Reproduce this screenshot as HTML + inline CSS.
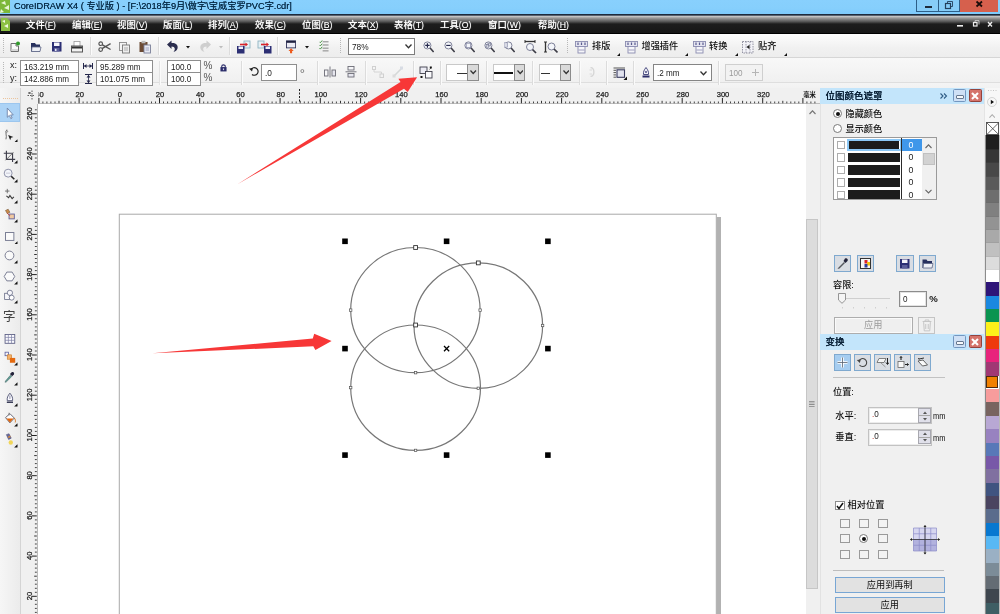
<!DOCTYPE html><html><head><meta charset="utf-8"><title>CorelDRAW X4</title><style>
*{box-sizing:border-box;margin:0;padding:0}
html,body{width:1000px;height:614px;overflow:hidden;background:#fff}
body{font-family:"Liberation Sans","Noto Sans CJK SC",sans-serif;font-size:9px;color:#222;position:relative;will-change:transform}
.a{position:absolute}
#title{left:0;top:0;width:1000px;height:14px;background:linear-gradient(#88d0fd,#86cffc 60%,#7dcafb)}
#title .t{left:14px;top:0;line-height:13px;font-size:9.23px;color:#0a2f4c;text-shadow:0 0 .5px #0a2f4c;white-space:nowrap;letter-spacing:0}
#menu{left:0;top:14px;width:1000px;height:20px;background:linear-gradient(#1c2a3c 0,#1c2a3c 1.3px,#d2d2d2 1.9px,#b4b4b4 3px,#8a8a8a 4.8px,#585858 7.5px,#1d1d1d 10px,#171717 19px,#000 19.5px)}
#menu span{position:absolute;top:2.3px;line-height:17px;font-size:9.4px;font-weight:500;color:#fff;white-space:nowrap;text-shadow:0 0 1px #999}
#menu span b{font-weight:400;font-size:8.7px}
#tb1{left:0;top:34px;width:1000px;height:23px;background:linear-gradient(#fdfdfd,#f1f1f1 60%,#ededed)}
#tb2{left:0;top:57px;width:1000px;height:31px;background:linear-gradient(#d6d6d6 0,#d6d6d6 1px,#f8f8f8 1px,#f0f0f0 25.5px,#dedede 25.5px,#dedede 26.3px,#f4f4f4 26.3px,#f2f2f2 100%)}
.sep{position:absolute;width:1px;background:#dcdcdc;box-shadow:1px 0 0 #fbfbfb}
.inp{position:absolute;background:#fff;border:1px solid #8e8e8e;font-size:9.4px;line-height:11px;padding-left:3px;color:#222;white-space:nowrap;overflow:hidden}
.inp>i{font-style:normal;display:inline-block;transform:scaleX(.865);transform-origin:0 50%}
.rl text{stroke:#1c1c1c;stroke-width:.25px}
.lbl{position:absolute;font-size:9px;line-height:11px;white-space:nowrap;color:#222}
#hr{left:24px;top:88px;width:796px;height:16px;background:#f0f0f0;border-bottom:1px solid #8a8a8a}
#vr{left:24px;top:104px;width:14px;height:510px;background:#f0f0f0;border-right:1px solid #8a8a8a}
#tools{left:0;top:88px;width:24px;height:526px;background:linear-gradient(90deg,#f6f6f6,#ebebeb)}
#canvas{left:38px;top:104px;width:768px;height:510px;background:#fff}
#vsb{left:806px;top:104px;width:14px;height:510px;background:#f0f0f0}
#dock{left:820px;top:88px;width:164px;height:526px;background:#f0f0f0}
#pal{left:984px;top:88px;width:16px;height:526px;background:#f7f7f7}
.dh{position:absolute;left:0;width:164px;height:15.5px;background:#c3e5fb;font-size:9.5px;line-height:15.5px;color:#0a2238;padding-left:5.5px;font-weight:500;text-shadow:0 0 .6px #0a2238}
#dock .lbl{font-weight:500;color:#111}
.btn{position:absolute;border:1px solid #7fa9cf;background:#dfe3e8}
.cb{position:absolute;width:9px;height:9px;border:1px solid #8a8a8a;background:#fff}
</style></head><body>
<div id="title" class="a">
<svg class="a" style="left:0;top:0" width="13" height="14" viewBox="0 0 13 14"><rect width="10" height="13" fill="#7db83a"/><path d="M1 3 L5 1 L6 5 Z M4 8 L9 5 L9 10 Z M1 9 L4 12 L0 13Z" fill="#e9f5d6"/></svg>
<div class="a t">CoreIDRAW X4 ( 专业版 ) - [F:\2018年9月\做字\宝威宝罗PVC字.cdr]</div>
<div class="a" style="left:916px;top:0;width:23px;height:12px;border:1px solid #2d5f88;border-top:0;background:#86cdf8"></div>
<div class="a" style="left:938px;top:0;width:22px;height:12px;border:1px solid #2d5f88;border-top:0;border-left:1px solid #2d5f88;background:#86cdf8"></div>
<div class="a" style="left:960px;top:0;width:38px;height:12px;background:#d6604d"></div>
<svg class="a" style="left:916px;top:0" width="84" height="14" viewBox="0 0 84 14"><rect x="9" y="6" width="7" height="2" fill="#1d2b3a"/><rect x="29.5" y="3.500" width="5" height="5" fill="none" stroke="#22405c" stroke-width="1.2"/><path d="M31.500 3 V1.500 H36.500 V6.500 H35" fill="none" stroke="#22405c" stroke-width="0.9"/><path d="M60.500 1.500 L66 6.500 M66 1.500 L60.500 6.500" stroke="#1b0d0a" stroke-width="1.8"/></svg>
</div>
<div id="menu" class="a">
<svg class="a" style="left:0;top:4px" width="11" height="14" viewBox="0 0 11 14"><path d="M1 0 H7 L10 3 V13 H1Z" fill="#8cc043"/><path d="M2 3 L5 2 L5 5Z M4 8 L8 6 L8 10Z" fill="#f0f8e0"/></svg>
<span style="left:26px">文件<b>(<u>F</u>)</b></span>
<span style="left:72px">编辑<b>(<u>E</u>)</b></span>
<span style="left:117px">视图<b>(<u>V</u>)</b></span>
<span style="left:163px">版面<b>(<u>L</u>)</b></span>
<span style="left:208px">排列<b>(<u>A</u>)</b></span>
<span style="left:255px">效果<b>(<u>C</u>)</b></span>
<span style="left:302px">位图<b>(<u>B</u>)</b></span>
<span style="left:348px">文本<b>(<u>X</u>)</b></span>
<span style="left:394px">表格<b>(<u>T</u>)</b></span>
<span style="left:440px">工具<b>(<u>O</u>)</b></span>
<span style="left:488px">窗口<b>(<u>W</u>)</b></span>
<span style="left:538px">帮助<b>(<u>H</u>)</b></span>
<svg class="a" style="left:955px;top:6px" width="40" height="10" viewBox="0 0 40 10"><rect x="2" y="5" width="6" height="1.600" fill="#eee"/><rect x="18.500" y="2.500" width="3.500" height="3.500" fill="none" stroke="#eee" stroke-width="1.200"/><path d="M20 2 V0.600 H24 V4.500" fill="none" stroke="#ddd" stroke-width="0.800"/><path d="M33 2 L37 6.500 M37 2 L33 6.500" stroke="#eee" stroke-width="1.300"/></svg>
</div>
<div id="tb1" class="a">
<svg class="a" style="left:3px;top:4px" width="2" height="16"><rect x="0" y="0" width="1" height="1" fill="#b8b8b8"/><rect x="0" y="2" width="1" height="1" fill="#b8b8b8"/><rect x="0" y="4" width="1" height="1" fill="#b8b8b8"/><rect x="0" y="6" width="1" height="1" fill="#b8b8b8"/><rect x="0" y="8" width="1" height="1" fill="#b8b8b8"/><rect x="0" y="10" width="1" height="1" fill="#b8b8b8"/><rect x="0" y="12" width="1" height="1" fill="#b8b8b8"/><rect x="0" y="14" width="1" height="1" fill="#b8b8b8"/></svg>
<svg class="a" style="left:10px;top:7px" width="11" height="12" viewBox="0 0 11 12"><path d="M1 2.500 H6 V5 H8.500 V10.500 H1Z" fill="#fafafa" stroke="#6e6e6e" stroke-width="1"/><rect x="1.500" y="8" width="6.500" height="2" fill="#d8d8d8"/><circle cx="8" cy="2.500" r="2" fill="#2f9a2a"/></svg>
<svg class="a" style="left:30px;top:7px" width="12" height="12" viewBox="0 0 12 12"><path d="M1 2 H5 L6 3.500 H10 V10.500 H1Z" fill="#27305e"/><path d="M2 6 H11 L10 10.500 H1.500Z" fill="#eef0f6" stroke="#5a6384" stroke-width="0.800"/></svg>
<svg class="a" style="left:52px;top:8px" width="10" height="10" viewBox="0 0 10 10"><rect x="0" y="0" width="9.500" height="9.500" fill="#2c2f74"/><rect x="2" y="0.500" width="5.500" height="3.500" fill="#f4f4fa"/><rect x="2" y="6" width="5.500" height="3.500" fill="#5b5e9a"/><rect x="3" y="6.800" width="1.500" height="2.200" fill="#e8e8f4"/></svg>
<svg class="a" style="left:71px;top:7px" width="12" height="12" viewBox="0 0 12 12"><rect x="3" y="0.500" width="6" height="5" fill="#fff" stroke="#9a9a9a" stroke-width="0.800"/><rect x="0.500" y="5" width="11" height="6" fill="#f2f2f2" stroke="#555" stroke-width="1"/><rect x="1" y="5.500" width="10" height="2" fill="#333"/></svg>
<div class="sep" style="left:90px;top:3px;height:18px"></div>
<svg class="a" style="left:97.5px;top:7px" width="13.5" height="11.7" viewBox="0 0 15 13"><circle cx="3" cy="3" r="2" fill="none" stroke="#555" stroke-width="1.300"/><circle cx="3" cy="9.500" r="2" fill="none" stroke="#555" stroke-width="1.300"/><path d="M4.500 4 L14 9.500 M4.500 8.500 L14 3" stroke="#555" stroke-width="1.500"/></svg>
<svg class="a" style="left:119px;top:8px" width="12" height="12" viewBox="0 0 12 12"><rect x="0.500" y="0.500" width="7" height="8" fill="#f4f4f4" stroke="#8a8a8a" stroke-width="0.900"/><rect x="3.500" y="3" width="7" height="8" fill="#eee" stroke="#777" stroke-width="0.900"/><path d="M5 6 H9 M5 8 H9" stroke="#999" stroke-width="0.800"/></svg>
<svg class="a" style="left:139px;top:6px" width="13" height="14" viewBox="0 0 13 14"><rect x="0.500" y="2" width="8" height="10" fill="#6b4a34"/><rect x="2.500" y="0.800" width="4" height="2.500" fill="#bdbdbd"/><rect x="5" y="5" width="6.500" height="8" fill="#e8eaf2" stroke="#7a7f99" stroke-width="0.900"/><path d="M6.500 8 H10 M6.500 10 H10" stroke="#8d93b5" stroke-width="0.800"/></svg>
<div class="sep" style="left:158px;top:3px;height:18px"></div>
<svg class="a" style="left:166px;top:6.2px" width="14" height="13" viewBox="0 0 14 13"><path d="M1 4.500 L5.500 0.500 V3 C10 2.500 12.500 5.500 11.500 8.500 C11 10.500 9.500 11.500 7.500 11.800 C9.500 10 9.500 6.500 5.500 6.500 V9Z" fill="#2b2d4e"/></svg>
<svg class="a" style="left:186px;top:12px" width="4" height="2.5" viewBox="0 0 4 2.5"><path d="M0 0 H4 L2.0 2.5Z" fill="#111"/></svg>
<svg class="a" style="left:198px;top:6.2px" width="14" height="13" viewBox="0 0 14 13"><path d="M13 4.500 L8.500 0.500 V3 C4 2.500 1.500 5.500 2.500 8.500 C3 10.500 4.500 11.500 6.500 11.800 C4.500 10 4.500 6.500 8.500 6.500 V9Z" fill="#cfcfcf"/></svg>
<svg class="a" style="left:219px;top:12px" width="4" height="2.5" viewBox="0 0 4 2.5"><path d="M0 0 H4 L2.0 2.5Z" fill="#bdbdbd"/></svg>
<div class="sep" style="left:229px;top:3px;height:18px"></div>
<svg class="a" style="left:236px;top:6px" width="15" height="14" viewBox="0 0 15 14"><rect x="8" y="1" width="6" height="7" fill="#e6f0f4" stroke="#8fb3c2" stroke-width="0.900"/><rect x="1" y="6" width="7.500" height="7.500" fill="#2c2f74"/><rect x="2.500" y="6.500" width="4.500" height="2.500" fill="#f0f0fa"/><path d="M4 4.500 H10" stroke="#d8232a" stroke-width="1.600"/><path d="M9.500 2.500 L12 4.500 L9.500 6.500Z" fill="#d8232a"/></svg>
<svg class="a" style="left:257px;top:6px" width="15" height="14" viewBox="0 0 15 14"><rect x="1" y="1" width="6" height="7" fill="#e6f0f4" stroke="#8fb3c2" stroke-width="0.900"/><rect x="7" y="6" width="7.500" height="7.500" fill="#2c2f74"/><rect x="8.500" y="6.500" width="4.500" height="2.500" fill="#f0f0fa"/><path d="M4 4.500 H10" stroke="#d8232a" stroke-width="1.600"/><path d="M9.500 2.500 L12 4.500 L9.500 6.500Z" fill="#d8232a"/></svg>
<div class="sep" style="left:277px;top:3px;height:18px"></div>
<svg class="a" style="left:285.8px;top:5.5px" width="10.5" height="14" viewBox="0 0 12 16"><rect x="0.500" y="1" width="10.500" height="8" fill="#ececf4" stroke="#2a2d55" stroke-width="1"/><rect x="0.500" y="1" width="10.500" height="2.200" fill="#1f2140"/><path d="M5.800 9.500 L8.800 12.500 H7 V15 H4.600 V12.500 H2.800Z" fill="#ee5a1c"/></svg>
<svg class="a" style="left:305px;top:12px" width="4" height="2.5" viewBox="0 0 4 2.5"><path d="M0 0 H4 L2.0 2.5Z" fill="#111"/></svg>
<svg class="a" style="left:318.5px;top:6px" width="10" height="11.8" viewBox="0 0 11 13"><path d="M4 2 H10.500 M4 5.500 H10.500 M4 9 H10.500 M4 12 H10.500" stroke="#7a7a7a" stroke-width="1"/><path d="M0.500 2 L1.500 3 L3.500 0.500 M0.500 5.500 L1.500 6.500 L3.500 4 M0.500 9 L1.500 10 L3.500 7.500" stroke="#3e8f3a" stroke-width="1" fill="none"/></svg>
<svg class="a" style="left:340px;top:4px" width="2" height="16"><rect x="0" y="0" width="1" height="1" fill="#b8b8b8"/><rect x="0" y="2" width="1" height="1" fill="#b8b8b8"/><rect x="0" y="4" width="1" height="1" fill="#b8b8b8"/><rect x="0" y="6" width="1" height="1" fill="#b8b8b8"/><rect x="0" y="8" width="1" height="1" fill="#b8b8b8"/><rect x="0" y="10" width="1" height="1" fill="#b8b8b8"/><rect x="0" y="12" width="1" height="1" fill="#b8b8b8"/><rect x="0" y="14" width="1" height="1" fill="#b8b8b8"/></svg>
<div class="inp" style="left:348px;top:4px;width:67px;height:17px;line-height:15px;font-size:9.6px;border-color:#7d7d7d"><i>78%</i></div>
<svg class="a" style="left:405px;top:10px" width="7" height="5" viewBox="0 0 7 5"><path d="M0.500 0.500 L3.500 3.800 L6.500 0.500" fill="none" stroke="#333" stroke-width="1.300"/></svg>
<svg class="a" style="left:422.5px;top:6.5px" width="11.5" height="12.4" viewBox="0 0 13 14"><circle cx="5" cy="5" r="4" fill="#f4f6fa" stroke="#7c7f97" stroke-width="1.100"/><path d="M2.500 5 H7.500 M5 2.500 V7.500" stroke="#23264a" stroke-width="1.300"/><path d="M8 8 L12 12.500" stroke="#3c3c46" stroke-width="1.800"/></svg>
<svg class="a" style="left:443.5px;top:6.5px" width="11.5" height="12.4" viewBox="0 0 13 14"><circle cx="5" cy="5" r="4" fill="#f4f6fa" stroke="#7c7f97" stroke-width="1.100"/><path d="M2.500 5 H7.500" stroke="#23264a" stroke-width="1.300"/><path d="M8 8 L12 12.500" stroke="#3c3c46" stroke-width="1.800"/></svg>
<svg class="a" style="left:463.5px;top:6.5px" width="11.5" height="12.4" viewBox="0 0 13 14"><circle cx="5" cy="5" r="4" fill="#f4f6fa" stroke="#7c7f97" stroke-width="1.100"/><rect x="2.500" y="2.500" width="5" height="5" fill="none" stroke="#8a8da8" stroke-width="0.900"/><path d="M8 8 L12 12.500" stroke="#3c3c46" stroke-width="1.800"/></svg>
<svg class="a" style="left:483.5px;top:6.5px" width="11.5" height="12.4" viewBox="0 0 13 14"><circle cx="5" cy="5" r="4" fill="#f4f6fa" stroke="#7c7f97" stroke-width="1.100"/><rect x="2.500" y="4" width="3" height="3" fill="none" stroke="#777a95" stroke-width="0.800"/><rect x="4.500" y="2.500" width="3" height="3" fill="none" stroke="#777a95" stroke-width="0.800"/><path d="M8 8 L12 12.500" stroke="#3c3c46" stroke-width="1.800"/></svg>
<svg class="a" style="left:503.5px;top:6.5px" width="11.5" height="12.4" viewBox="0 0 13 14"><circle cx="5" cy="5" r="4" fill="#f4f6fa" stroke="#7c7f97" stroke-width="1.100"/><rect x="0" y="2" width="4" height="5" fill="#d9dbe6" stroke="#8a8da8" stroke-width="0.700"/><path d="M8 8 L12 12.500" stroke="#3c3c46" stroke-width="1.800"/></svg>
<svg class="a" style="left:524px;top:6px" width="13" height="14" viewBox="0 0 13 14"><path d="M1 1.500 H11" stroke="#333" stroke-width="1.300"/><path d="M1 0 V3 M11 0 V3" stroke="#333" stroke-width="1"/><circle cx="6" cy="7" r="3.500" fill="#f4f6fa" stroke="#7c7f97" stroke-width="1"/><path d="M8.500 9.500 L12 13" stroke="#3c3c46" stroke-width="1.700"/></svg>
<svg class="a" style="left:544px;top:6px" width="14" height="14" viewBox="0 0 14 14"><path d="M1.500 2 V12" stroke="#333" stroke-width="1.300"/><path d="M0 2 H3 M0 12 H3" stroke="#333" stroke-width="1"/><circle cx="7.500" cy="6.500" r="3.500" fill="#f4f6fa" stroke="#7c7f97" stroke-width="1"/><path d="M10 9 L13.500 12.500" stroke="#3c3c46" stroke-width="1.700"/></svg>
<svg class="a" style="left:567px;top:4px" width="2" height="16"><rect x="0" y="0" width="1" height="1" fill="#b8b8b8"/><rect x="0" y="2" width="1" height="1" fill="#b8b8b8"/><rect x="0" y="4" width="1" height="1" fill="#b8b8b8"/><rect x="0" y="6" width="1" height="1" fill="#b8b8b8"/><rect x="0" y="8" width="1" height="1" fill="#b8b8b8"/><rect x="0" y="10" width="1" height="1" fill="#b8b8b8"/><rect x="0" y="12" width="1" height="1" fill="#b8b8b8"/><rect x="0" y="14" width="1" height="1" fill="#b8b8b8"/></svg>
<svg class="a" style="left:575px;top:7px" width="13" height="13" viewBox="0 0 13 13"><rect x="0.500" y="0.500" width="12" height="5" fill="#e4e4f0" stroke="#8b8cb0" stroke-width="0.900"/><path d="M3 1.500 V4 M6.500 1.500 V4 M10 1.500 V4" stroke="#5a5c90" stroke-width="1.200"/><rect x="3" y="5.500" width="7" height="6.500" fill="#f6f6fa" stroke="#8b8cb0" stroke-width="0.900"/><path d="M3.500 9 H9.500" stroke="#8b8cb0" stroke-width="0.800"/></svg>
<div class="lbl" style="left:592px;top:6px;font-size:9.2px;line-height:12px;color:#111;font-weight:500">排版</div>
<svg class="a" style="left:617px;top:19px" width="3" height="3" viewBox="0 0 3 3"><path d="M3 0 V3 H0Z" fill="#111"/></svg>
<svg class="a" style="left:625px;top:7px" width="13" height="13" viewBox="0 0 13 13"><rect x="0.500" y="0.500" width="12" height="5" fill="#e4e4f0" stroke="#8b8cb0" stroke-width="0.900"/><path d="M3 1.500 V4 M6.500 1.500 V4 M10 1.500 V4" stroke="#5a5c90" stroke-width="1.200"/><rect x="3" y="5.500" width="7" height="6.500" fill="#f6f6fa" stroke="#8b8cb0" stroke-width="0.900"/><path d="M3.500 9 H9.500" stroke="#8b8cb0" stroke-width="0.800"/></svg>
<div class="lbl" style="left:641.5px;top:6px;font-size:9.2px;line-height:12px;color:#111;font-weight:500">增强插件</div>
<svg class="a" style="left:685px;top:19px" width="3" height="3" viewBox="0 0 3 3"><path d="M3 0 V3 H0Z" fill="#111"/></svg>
<svg class="a" style="left:693px;top:7px" width="13" height="13" viewBox="0 0 13 13"><rect x="0.500" y="0.500" width="12" height="5" fill="#e4e4f0" stroke="#8b8cb0" stroke-width="0.900"/><path d="M3 1.500 V4 M6.500 1.500 V4 M10 1.500 V4" stroke="#5a5c90" stroke-width="1.200"/><rect x="3" y="5.500" width="7" height="6.500" fill="#f6f6fa" stroke="#8b8cb0" stroke-width="0.900"/><path d="M3.500 9 H9.500" stroke="#8b8cb0" stroke-width="0.800"/></svg>
<div class="lbl" style="left:709px;top:6px;font-size:9.2px;line-height:12px;color:#111;font-weight:500">转换</div>
<svg class="a" style="left:735px;top:19px" width="3" height="3" viewBox="0 0 3 3"><path d="M3 0 V3 H0Z" fill="#111"/></svg>
<svg class="a" style="left:742px;top:7px" width="12" height="13" viewBox="0 0 12 13"><rect x="0.500" y="0.500" width="10.500" height="11.500" fill="#f3f3f8" stroke="#7b7b8e" stroke-width="0.800" stroke-dasharray="1.500 1"/><path d="M4 0.500 V12 M8 0.500 V12" stroke="#7b7b8e" stroke-width="0.700" stroke-dasharray="1.500 1"/><path d="M4.500 6 L7.500 3.800 V8.200Z" fill="#222"/></svg>
<div class="lbl" style="left:758px;top:6px;font-size:9.2px;line-height:12px;color:#111;font-weight:500">贴齐</div>
<svg class="a" style="left:784px;top:19px" width="3" height="3" viewBox="0 0 3 3"><path d="M3 0 V3 H0Z" fill="#111"/></svg>
</div>
<div id="tb2" class="a">
<svg class="a" style="left:3px;top:5px" width="2" height="22"><rect x="0" y="0" width="1" height="1" fill="#b8b8b8"/><rect x="0" y="2" width="1" height="1" fill="#b8b8b8"/><rect x="0" y="4" width="1" height="1" fill="#b8b8b8"/><rect x="0" y="6" width="1" height="1" fill="#b8b8b8"/><rect x="0" y="8" width="1" height="1" fill="#b8b8b8"/><rect x="0" y="10" width="1" height="1" fill="#b8b8b8"/><rect x="0" y="12" width="1" height="1" fill="#b8b8b8"/><rect x="0" y="14" width="1" height="1" fill="#b8b8b8"/><rect x="0" y="16" width="1" height="1" fill="#b8b8b8"/><rect x="0" y="18" width="1" height="1" fill="#b8b8b8"/><rect x="0" y="20" width="1" height="1" fill="#b8b8b8"/></svg>
<div class="lbl" style="left:10px;top:3px;font-size:9px">x:</div>
<div class="lbl" style="left:10px;top:15.500px;font-size:9px">y:</div>
<div class="inp" style="left:19.500px;top:2.500px;width:59px;height:13.500px;line-height:11.500px"><i>163.219 mm</i></div>
<div class="inp" style="left:19.500px;top:15px;width:59px;height:13.500px;line-height:11.500px"><i>142.886 mm</i></div>
<svg class="a" style="left:83px;top:6px" width="10" height="6" viewBox="0 0 10 6"><path d="M0.500 0 V6 M9.500 0 V6" stroke="#23264a" stroke-width="1"/><path d="M1 3 H9" stroke="#23264a" stroke-width="0.800"/><path d="M1 3 L3.500 1 V5Z M9 3 L6.500 1 V5Z" fill="#23264a"/></svg>
<svg class="a" style="left:85px;top:17px" width="7" height="10" viewBox="0 0 7 10"><path d="M0 0.500 H7 M0 9.500 H7" stroke="#23264a" stroke-width="1"/><path d="M3.500 1 V9" stroke="#23264a" stroke-width="0.800"/><path d="M3.500 1 L1.500 3.500 H5.500Z M3.500 9 L1.500 6.500 H5.500Z" fill="#23264a"/></svg>
<div class="inp" style="left:95.500px;top:2.500px;width:57px;height:13.500px;line-height:11.500px"><i>95.289 mm</i></div>
<div class="inp" style="left:95.500px;top:15px;width:57px;height:13.500px;line-height:11.500px"><i>101.075 mm</i></div>
<div class="sep" style="left:159px;top:4px;height:24px;background:#e2e2e2"></div>
<div class="inp" style="left:167px;top:2.500px;width:33.500px;height:13.500px;line-height:11.500px"><i>100.0</i></div>
<div class="inp" style="left:167px;top:15px;width:33.500px;height:13.500px;line-height:11.500px"><i>100.0</i></div>
<div class="lbl" style="left:203.500px;top:2.500px;font-size:10px;line-height:12px;color:#555">%</div>
<div class="lbl" style="left:203.500px;top:15px;font-size:10px;line-height:12px;color:#555">%</div>
<svg class="a" style="left:220px;top:7.3px" width="7" height="7.9" viewBox="0 0 8 9"><path d="M2 4 V2.500 C2 0.500 6 0.500 6 2.500 V4" fill="none" stroke="#2b2d6a" stroke-width="1.200"/><rect x="0.500" y="3.500" width="7" height="5" fill="#2b2d6a"/><rect x="3.300" y="5" width="1.400" height="2" fill="#c9cbe8"/></svg>
<div class="sep" style="left:240.500px;top:4px;height:24px"></div>
<svg class="a" style="left:249px;top:8.5px" width="10" height="11" viewBox="0 0 10 11"><path d="M2 3.500 A3.800 3.800 0 1 1 3 8.500" fill="none" stroke="#222" stroke-width="1.200"/><path d="M0 2.500 L4 2 L3 5.500Z" fill="#222"/></svg>
<div class="inp" style="left:261px;top:7px;width:36px;height:17px;line-height:15px;font-size:9.6px"><i>.0</i></div>
<div class="lbl" style="left:299.700px;top:10.200px;font-size:13px;line-height:14px;color:#707070">°</div>
<div class="sep" style="left:317px;top:4px;height:24px"></div>
<svg class="a" style="left:324px;top:9px" width="12" height="12" viewBox="0 0 12 12"><rect x="0.500" y="4" width="3.500" height="6" fill="#f6f6f8" stroke="#6c6c76" stroke-width="0.900"/><rect x="8" y="4" width="3.500" height="6" fill="#e6e6ee" stroke="#6c6c76" stroke-width="0.900"/><path d="M6 0.500 V11.500" stroke="#6c6c76" stroke-width="0.900"/></svg>
<svg class="a" style="left:345px;top:9px" width="12" height="12" viewBox="0 0 12 12"><rect x="3" y="0.500" width="6" height="3.500" fill="#f6f6f8" stroke="#6c6c76" stroke-width="0.900"/><rect x="3" y="7.500" width="6" height="3.500" fill="#e6e6ee" stroke="#6c6c76" stroke-width="0.900"/><path d="M0.500 5.800 H11.500" stroke="#6c6c76" stroke-width="0.900"/></svg>
<div class="sep" style="left:364.500px;top:4px;height:24px"></div>
<svg class="a" style="left:372px;top:9px" width="12" height="12" viewBox="0 0 12 12"><rect x="0.500" y="0.500" width="3" height="3" fill="none" stroke="#d0d0d0"/><rect x="8" y="8" width="3.500" height="3.500" fill="none" stroke="#d0d0d0"/><path d="M2 3.500 V6 H9.500 V8" fill="none" stroke="#d4d4d4"/></svg>
<svg class="a" style="left:392px;top:9px" width="12" height="12" viewBox="0 0 12 12"><path d="M2 10 L10 2" stroke="#d4d8d8" stroke-width="1.600"/><rect x="8" y="0.500" width="3" height="3" fill="#d8dce4"/><rect x="0.500" y="8.500" width="3" height="3" fill="#dcdcdc"/></svg>
<div class="sep" style="left:412.500px;top:4px;height:24px"></div>
<svg class="a" style="left:419px;top:8.7px" width="14" height="13" viewBox="0 0 14 13"><rect x="1" y="1" width="7" height="6.500" fill="#ececf4" stroke="#3f3f4c" stroke-width="0.900"/><rect x="6.500" y="5.500" width="6.500" height="6.500" fill="#fafafc" stroke="#3f3f4c" stroke-width="0.900"/><rect x="10.800" y="0.500" width="2" height="2" fill="#111"/><rect x="1.500" y="10" width="2" height="2" fill="#111"/><path d="M10.500 3.500 L12 2" stroke="#333" stroke-width="0.700"/></svg>
<div class="sep" style="left:439.500px;top:4px;height:24px"></div>
<div class="a" style="left:446px;top:7px;width:33px;height:17px;background:#fff;border:1px solid #c9c9c9"></div><div class="a" style="left:467px;top:7px;width:12px;height:17px;background:#dadada;border:1px solid #8c8c8c"></div><svg class="a" style="left:470px;top:13px" width="6.5" height="5" viewBox="0 0 6.5 5"><path d="M0.500 0.500 L3.200 3.500 L6 0.500" fill="none" stroke="#333" stroke-width="1.200"/></svg><div class="a" style="left:456.500px;top:15.500px;width:10.500px;height:1px;background:#333"></div>
<div class="sep" style="left:485.500px;top:4px;height:24px"></div>
<div class="a" style="left:492.5px;top:7px;width:32.5px;height:17px;background:#fff;border:1px solid #c9c9c9"></div><div class="a" style="left:513.5px;top:7px;width:11.5px;height:17px;background:#dadada;border:1px solid #8c8c8c"></div><svg class="a" style="left:516.5px;top:13px" width="6.5" height="5" viewBox="0 0 6.5 5"><path d="M0.500 0.500 L3.200 3.500 L6 0.500" fill="none" stroke="#333" stroke-width="1.200"/></svg><div class="a" style="left:494px;top:15px;width:19px;height:1.500px;background:#111"></div>
<div class="sep" style="left:532px;top:4px;height:24px"></div>
<div class="a" style="left:538.5px;top:7px;width:32.5px;height:17px;background:#fff;border:1px solid #c9c9c9"></div><div class="a" style="left:559.5px;top:7px;width:11.5px;height:17px;background:#dadada;border:1px solid #8c8c8c"></div><svg class="a" style="left:562.5px;top:13px" width="6.5" height="5" viewBox="0 0 6.5 5"><path d="M0.500 0.500 L3.200 3.500 L6 0.500" fill="none" stroke="#333" stroke-width="1.200"/></svg><div class="a" style="left:540.500px;top:15.500px;width:9px;height:1px;background:#333"></div>
<div class="sep" style="left:578.500px;top:4px;height:24px"></div>
<svg class="a" style="left:589px;top:10px" width="7" height="10" viewBox="0 0 7 10"><path d="M1.500 0.500 C6 1 6 9 1.500 9.500" fill="none" stroke="#d6d6d6" stroke-width="1.300"/><path d="M0.500 3 H3 M0.500 7 H3" stroke="#dadada"/></svg>
<div class="sep" style="left:605.500px;top:4px;height:24px"></div>
<svg class="a" style="left:613px;top:9.5px" width="15" height="13" viewBox="0 0 15 13"><path d="M0.500 1 H12 M0.500 3.300 H3 M0.500 5.600 H3 M0.500 7.900 H3 M0.500 10.200 H3" stroke="#444" stroke-width="0.900"/><rect x="4" y="2.800" width="7.500" height="7.500" fill="#e2e3ef" stroke="#3a3c60" stroke-width="1.100"/><path d="M14 9.500 V13 H10.500Z" fill="#111"/></svg>
<div class="sep" style="left:633px;top:4px;height:24px"></div>
<svg class="a" style="left:642px;top:10px" width="8" height="11" viewBox="0 0 8 11"><path d="M4 0.500 C2 3 1.200 5 1.500 7.500 H6.500 C6.800 5 6 3 4 0.500Z" fill="#f0f0f8" stroke="#3a3c74" stroke-width="0.900"/><circle cx="4" cy="5" r="0.900" fill="#3a3c74"/><rect x="0.500" y="8.500" width="7" height="2" fill="#2b2d6a"/></svg>
<div class="inp" style="left:653px;top:7px;width:59px;height:17px;line-height:15px;font-size:9.4px;border-color:#858585"><i>.2 mm</i></div>
<svg class="a" style="left:700px;top:13.5px" width="7" height="5" viewBox="0 0 7 5"><path d="M0.500 0.500 L3.500 3.800 L6.500 0.500" fill="none" stroke="#333" stroke-width="1.300"/></svg>
<div class="sep" style="left:718px;top:4px;height:24px"></div>
<div class="inp" style="left:725px;top:6.500px;width:38px;height:17.500px;line-height:15.500px;font-size:9.4px;background:#f2f2f2;border-color:#cfcfcf;color:#9a9a9a"><i>100</i></div>
<svg class="a" style="left:752px;top:12px" width="7" height="7" viewBox="0 0 7 7"><path d="M0 3.500 H7 M3.500 0 V7" stroke="#b5b5b5" stroke-width="1"/></svg>
</div>
<svg class="a rl" style="left:22px;top:88px" width="798" height="16" viewBox="22 88 798 16" font-family="Liberation Sans, sans-serif" font-size="7.600" fill="#1c1c1c"><rect x="22" y="88" width="798" height="16" fill="#f0f0f0"/><rect x="38" y="103.300" width="782" height="0.900" fill="#a8a8a8"/><clipPath id="rc"><rect x="38.600" y="88" width="790" height="16"/></clipPath><g clip-path="url(#rc)"><text x="39.5" y="96.700" text-anchor="middle">40</text><text x="79.7" y="96.700" text-anchor="middle">20</text><text x="119.9" y="96.700" text-anchor="middle">0</text><text x="160.1" y="96.700" text-anchor="middle">20</text><text x="200.3" y="96.700" text-anchor="middle">40</text><text x="240.5" y="96.700" text-anchor="middle">60</text><text x="280.7" y="96.700" text-anchor="middle">80</text><text x="320.9" y="96.700" text-anchor="middle">100</text><text x="361.2" y="96.700" text-anchor="middle">120</text><text x="401.4" y="96.700" text-anchor="middle">140</text><text x="441.6" y="96.700" text-anchor="middle">160</text><text x="481.8" y="96.700" text-anchor="middle">180</text><text x="522.0" y="96.700" text-anchor="middle">200</text><text x="562.2" y="96.700" text-anchor="middle">220</text><text x="602.4" y="96.700" text-anchor="middle">240</text><text x="642.6" y="96.700" text-anchor="middle">260</text><text x="682.8" y="96.700" text-anchor="middle">280</text><text x="723.0" y="96.700" text-anchor="middle">300</text><text x="763.3" y="96.700" text-anchor="middle">320</text></g><path d="M38.9 98V103.300M79.1 98V103.300M119.3 98V103.300M159.5 98V103.300M199.7 98V103.300M239.9 98V103.300M280.1 98V103.300M320.3 98V103.300M360.6 98V103.300M400.8 98V103.300M441.0 98V103.300M481.2 98V103.300M521.4 98V103.300M561.6 98V103.300M601.8 98V103.300M642.0 98V103.300M682.2 98V103.300M722.4 98V103.300M762.7 98V103.300M802.9 98V103.300" stroke="#222" stroke-width="1"/><path d="M59.0 100.800V103.300M99.2 100.800V103.300M139.4 100.800V103.300M179.6 100.800V103.300M219.8 100.800V103.300M260.0 100.800V103.300M300.2 100.800V103.300M340.5 100.800V103.300M380.7 100.800V103.300M420.9 100.800V103.300M461.1 100.800V103.300M501.3 100.800V103.300M541.5 100.800V103.300M581.7 100.800V103.300M621.9 100.800V103.300M662.1 100.800V103.300M702.3 100.800V103.300M742.6 100.800V103.300M782.8 100.800V103.300" stroke="#333" stroke-width="1"/><path d="M42.9 101.500V103.300M46.9 101.500V103.300M50.9 101.500V103.300M55.0 101.500V103.300M63.0 101.500V103.300M67.0 101.500V103.300M71.0 101.500V103.300M75.1 101.500V103.300M83.1 101.500V103.300M87.1 101.500V103.300M91.2 101.500V103.300M95.2 101.500V103.300M103.2 101.500V103.300M107.2 101.500V103.300M111.3 101.500V103.300M115.3 101.500V103.300M123.3 101.500V103.300M127.3 101.500V103.300M131.4 101.500V103.300M135.4 101.500V103.300M143.4 101.500V103.300M147.4 101.500V103.300M151.5 101.500V103.300M155.5 101.500V103.300M163.5 101.500V103.300M167.6 101.500V103.300M171.6 101.500V103.300M175.6 101.500V103.300M183.6 101.500V103.300M187.7 101.500V103.300M191.7 101.500V103.300M195.7 101.500V103.300M203.7 101.500V103.300M207.8 101.500V103.300M211.8 101.500V103.300M215.8 101.500V103.300M223.8 101.500V103.300M227.9 101.500V103.300M231.9 101.500V103.300M235.9 101.500V103.300M244.0 101.500V103.300M248.0 101.500V103.300M252.0 101.500V103.300M256.0 101.500V103.300M264.1 101.500V103.300M268.1 101.500V103.300M272.1 101.500V103.300M276.1 101.500V103.300M284.2 101.500V103.300M288.2 101.500V103.300M292.2 101.500V103.300M296.2 101.500V103.300M304.3 101.500V103.300M308.3 101.500V103.300M312.3 101.500V103.300M316.3 101.500V103.300M324.4 101.500V103.300M328.4 101.500V103.300M332.4 101.500V103.300M336.4 101.500V103.300M344.5 101.500V103.300M348.5 101.500V103.300M352.5 101.500V103.300M356.5 101.500V103.300M364.6 101.500V103.300M368.6 101.500V103.300M372.6 101.500V103.300M376.6 101.500V103.300M384.7 101.500V103.300M388.7 101.500V103.300M392.7 101.500V103.300M396.7 101.500V103.300M404.8 101.500V103.300M408.8 101.500V103.300M412.8 101.500V103.300M416.9 101.500V103.300M424.9 101.500V103.300M428.9 101.500V103.300M432.9 101.500V103.300M437.0 101.500V103.300M445.0 101.500V103.300M449.0 101.500V103.300M453.0 101.500V103.300M457.1 101.500V103.300M465.1 101.500V103.300M469.1 101.500V103.300M473.1 101.500V103.300M477.2 101.500V103.300M485.2 101.500V103.300M489.2 101.500V103.300M493.3 101.500V103.300M497.3 101.500V103.300M505.3 101.500V103.300M509.3 101.500V103.300M513.4 101.500V103.300M517.4 101.500V103.300M525.4 101.500V103.300M529.4 101.500V103.300M533.5 101.500V103.300M537.5 101.500V103.300M545.5 101.500V103.300M549.5 101.500V103.300M553.6 101.500V103.300M557.6 101.500V103.300M565.6 101.500V103.300M569.7 101.500V103.300M573.7 101.500V103.300M577.7 101.500V103.300M585.7 101.500V103.300M589.8 101.500V103.300M593.8 101.500V103.300M597.8 101.500V103.300M605.8 101.500V103.300M609.9 101.500V103.300M613.9 101.500V103.300M617.9 101.500V103.300M625.9 101.500V103.300M630.0 101.500V103.300M634.0 101.500V103.300M638.0 101.500V103.300M646.1 101.500V103.300M650.1 101.500V103.300M654.1 101.500V103.300M658.1 101.500V103.300M666.2 101.500V103.300M670.2 101.500V103.300M674.2 101.500V103.300M678.2 101.500V103.300M686.3 101.500V103.300M690.3 101.500V103.300M694.3 101.500V103.300M698.3 101.500V103.300M706.4 101.500V103.300M710.4 101.500V103.300M714.4 101.500V103.300M718.4 101.500V103.300M726.5 101.500V103.300M730.5 101.500V103.300M734.5 101.500V103.300M738.5 101.500V103.300M746.6 101.500V103.300M750.6 101.500V103.300M754.6 101.500V103.300M758.6 101.500V103.300M766.7 101.500V103.300M770.7 101.500V103.300M774.7 101.500V103.300M778.7 101.500V103.300M786.8 101.500V103.300M790.8 101.500V103.300M794.8 101.500V103.300M798.8 101.500V103.300M806.9 101.500V103.300M810.9 101.500V103.300M814.9 101.500V103.300" stroke="#444" stroke-width="1"/><text x="803.300" y="96.800" font-size="6.300" font-weight="700" fill="#111" style="stroke:none" font-family="Liberation Sans, Noto Sans CJK SC, sans-serif">毫米</text><path d="M299.500 89 V103" stroke="#222" stroke-width="1" stroke-dasharray="2 1.500"/><path d="M27.500 95.500 H34.500 M32 90.500 V100" stroke="#333" stroke-width="0.800" stroke-dasharray="1.500 1"/><path d="M28.500 92 L30.500 94 M30.500 92 L28.500 94" stroke="#222" stroke-width="0.800"/></svg>
<svg class="a rl" style="left:22px;top:104px" width="16" height="510" viewBox="22 104 16 510" font-family="Liberation Sans, sans-serif" font-size="7.600" fill="#1c1c1c"><rect x="22" y="104" width="16" height="510" fill="#f0f0f0"/><rect x="37.100" y="104" width="0.900" height="510" fill="#b4b4b4"/><text transform="translate(31.800 113.5) rotate(-90)" text-anchor="middle">260</text><text transform="translate(31.800 153.7) rotate(-90)" text-anchor="middle">240</text><text transform="translate(31.800 193.9) rotate(-90)" text-anchor="middle">220</text><text transform="translate(31.800 234.1) rotate(-90)" text-anchor="middle">200</text><text transform="translate(31.800 274.3) rotate(-90)" text-anchor="middle">180</text><text transform="translate(31.800 314.5) rotate(-90)" text-anchor="middle">160</text><text transform="translate(31.800 354.7) rotate(-90)" text-anchor="middle">140</text><text transform="translate(31.800 394.9) rotate(-90)" text-anchor="middle">120</text><text transform="translate(31.800 435.2) rotate(-90)" text-anchor="middle">100</text><text transform="translate(31.800 475.4) rotate(-90)" text-anchor="middle">80</text><text transform="translate(31.800 515.6) rotate(-90)" text-anchor="middle">60</text><text transform="translate(31.800 555.8) rotate(-90)" text-anchor="middle">40</text><text transform="translate(31.800 596.0) rotate(-90)" text-anchor="middle">20</text><path d="M31.700 113.8H36.800M31.700 154.0H36.800M31.700 194.2H36.800M31.700 234.4H36.800M31.700 274.6H36.800M31.700 314.8H36.800M31.700 355.0H36.800M31.700 395.2H36.800M31.700 435.5H36.800M31.700 475.7H36.800M31.700 515.9H36.800M31.700 556.1H36.800M31.700 596.3H36.800" stroke="#222" stroke-width="1"/><path d="M34.200 133.9H36.800M34.200 174.1H36.800M34.200 214.3H36.800M34.200 254.5H36.800M34.200 294.7H36.800M34.200 334.9H36.800M34.200 375.1H36.800M34.200 415.4H36.800M34.200 455.6H36.800M34.200 495.8H36.800M34.200 536.0H36.800M34.200 576.2H36.800" stroke="#333" stroke-width="1"/><path d="M34.900 109.8H36.800M34.900 117.8H36.800M34.900 121.8H36.800M34.900 125.8H36.800M34.900 129.9H36.800M34.900 137.9H36.800M34.900 141.9H36.800M34.900 145.9H36.800M34.900 150.0H36.800M34.900 158.0H36.800M34.900 162.0H36.800M34.900 166.0H36.800M34.900 170.1H36.800M34.900 178.1H36.800M34.900 182.1H36.800M34.900 186.2H36.800M34.900 190.2H36.800M34.900 198.2H36.800M34.900 202.2H36.800M34.900 206.3H36.800M34.900 210.3H36.800M34.900 218.3H36.800M34.900 222.3H36.800M34.900 226.4H36.800M34.900 230.4H36.800M34.900 238.4H36.800M34.900 242.4H36.800M34.900 246.5H36.800M34.900 250.5H36.800M34.900 258.5H36.800M34.900 262.6H36.800M34.900 266.6H36.800M34.900 270.6H36.800M34.900 278.6H36.800M34.900 282.7H36.800M34.900 286.7H36.800M34.900 290.7H36.800M34.900 298.7H36.800M34.900 302.8H36.800M34.900 306.8H36.800M34.900 310.8H36.800M34.900 318.8H36.800M34.900 322.9H36.800M34.900 326.9H36.800M34.900 330.9H36.800M34.900 339.0H36.800M34.900 343.0H36.800M34.900 347.0H36.800M34.900 351.0H36.800M34.900 359.1H36.800M34.900 363.1H36.800M34.900 367.1H36.800M34.900 371.1H36.800M34.900 379.2H36.800M34.900 383.2H36.800M34.900 387.2H36.800M34.900 391.2H36.800M34.900 399.3H36.800M34.900 403.3H36.800M34.900 407.3H36.800M34.900 411.3H36.800M34.900 419.4H36.800M34.900 423.4H36.800M34.900 427.4H36.800M34.900 431.4H36.800M34.900 439.5H36.800M34.900 443.5H36.800M34.900 447.5H36.800M34.900 451.5H36.800M34.900 459.6H36.800M34.900 463.6H36.800M34.900 467.6H36.800M34.900 471.6H36.800M34.900 479.7H36.800M34.900 483.7H36.800M34.900 487.7H36.800M34.900 491.7H36.800M34.900 499.8H36.800M34.900 503.8H36.800M34.900 507.8H36.800M34.900 511.9H36.800M34.900 519.9H36.800M34.900 523.9H36.800M34.900 527.9H36.800M34.900 532.0H36.800M34.900 540.0H36.800M34.900 544.0H36.800M34.900 548.0H36.800M34.900 552.1H36.800M34.900 560.1H36.800M34.900 564.1H36.800M34.900 568.1H36.800M34.900 572.2H36.800M34.900 580.2H36.800M34.900 584.2H36.800M34.900 588.3H36.800M34.900 592.3H36.800M34.900 600.3H36.800M34.900 604.3H36.800M34.900 608.4H36.800M34.900 612.4H36.800" stroke="#444" stroke-width="1"/></svg>
<div id="tools" class="a" style="width:20px"></div>
<div class="a" style="left:19.700px;top:88px;width:1px;height:526px;background:#d4d4d4"></div>
<div class="a" style="left:20.700px;top:88px;width:2px;height:526px;background:#f0f0f0"></div>
<svg class="a" style="left:3px;top:98.200px" width="16" height="2"><rect x="0" y="0" width="1" height="1" fill="#ecc49c"/><rect x="2" y="0" width="1" height="1" fill="#ecc49c"/><rect x="4" y="0" width="1" height="1" fill="#ecc49c"/><rect x="6" y="0" width="1" height="1" fill="#ecc49c"/><rect x="8" y="0" width="1" height="1" fill="#ecc49c"/><rect x="10" y="0" width="1" height="1" fill="#ecc49c"/><rect x="12" y="0" width="1" height="1" fill="#ecc49c"/><rect x="14" y="0" width="1" height="1" fill="#ecc49c"/></svg>
<div class="a" style="left:0;top:103.300px;width:19.500px;height:18.500px;background:#acd3f6;border:1px solid #9cc6ee;border-left:0"></div>
<svg class="a" style="left:1.88px;top:105.08px" width="15.84" height="15.84" viewBox="0 0 18 18"><path d="M6 3.500 V14 L8.300 11.800 L10 15.500 L11.500 14.800 L9.800 11.300 H12.800Z" fill="#fff" stroke="#6d83a8" stroke-width="1"/></svg>
<svg class="a" style="left:1.88px;top:126.58px" width="15.84" height="15.84" viewBox="0 0 18 18"><path d="M5.500 3 C3 7 6 9 4.500 14" fill="none" stroke="#5a5a5a" stroke-width="1"/><circle cx="5.500" cy="5" r="1" fill="#fff" stroke="#555" stroke-width="0.700"/><path d="M7 9 L13 11.500 L10.300 12.300 L9.300 15Z" fill="#222"/><path d="M17.600 13.800 V17.600 H13.800Z" fill="#111"/></svg>
<svg class="a" style="left:1.88px;top:147.78px" width="15.84" height="15.84" viewBox="0 0 18 18"><path d="M5 3 V13 H15 M2 6 H12 V16" fill="none" stroke="#3d3d4a" stroke-width="1.300"/><path d="M4 14 L13 5" stroke="#555" stroke-width="0.900"/><path d="M17.600 13.800 V17.600 H13.800Z" fill="#111"/></svg>
<svg class="a" style="left:1.88px;top:166.68px" width="15.84" height="15.84" viewBox="0 0 18 18"><circle cx="7" cy="7" r="4.500" fill="#f3f5fa" stroke="#8c8fa6" stroke-width="1.100"/><path d="M4.500 7 H9.500" stroke="#b7b9c9" stroke-width="0.800"/><path d="M10.500 10.500 L14 14" stroke="#222" stroke-width="1.800"/><path d="M17.600 13.800 V17.600 H13.800Z" fill="#111"/></svg>
<svg class="a" style="left:1.88px;top:187.78px" width="15.84" height="15.84" viewBox="0 0 18 18"><path d="M3.500 3.500 H8.500 M6 1 V6" stroke="#666" stroke-width="1"/><path d="M5 9 L7.500 11 L9 8.500 L11.500 12 L13.500 10" fill="none" stroke="#3c3c3c" stroke-width="1.300"/><path d="M17.600 13.800 V17.600 H13.800Z" fill="#111"/></svg>
<svg class="a" style="left:1.88px;top:207.38px" width="15.84" height="15.84" viewBox="0 0 18 18"><path d="M4 4 L7 2.500 L9 6 L6 7.500Z" fill="#c98b4a" stroke="#7a5a3a" stroke-width="0.700"/><rect x="8" y="8" width="6" height="5.500" fill="#f0c9a0" stroke="#5b5e9a" stroke-width="1"/><path d="M6 7 L9 10" stroke="#c0392b" stroke-width="1"/><path d="M17.600 13.800 V17.600 H13.800Z" fill="#111"/></svg>
<svg class="a" style="left:1.88px;top:228.58px" width="15.84" height="15.84" viewBox="0 0 18 18"><rect x="4" y="4" width="9.500" height="9" fill="#fafafa" stroke="#787c92" stroke-width="1.100"/><path d="M17.600 13.800 V17.600 H13.800Z" fill="#111"/></svg>
<svg class="a" style="left:1.88px;top:248.08px" width="15.84" height="15.84" viewBox="0 0 18 18"><circle cx="8.500" cy="8.500" r="5" fill="#fafafa" stroke="#777a90" stroke-width="1.100"/><path d="M17.600 13.800 V17.600 H13.800Z" fill="#111"/></svg>
<svg class="a" style="left:1.88px;top:269.28px" width="15.84" height="15.84" viewBox="0 0 18 18"><path d="M5.500 3.500 H11.500 L14.500 8.500 L11.500 13.500 H5.500 L2.500 8.500Z" fill="#fafafa" stroke="#787c92" stroke-width="1.100"/><path d="M17.600 13.800 V17.600 H13.800Z" fill="#111"/></svg>
<svg class="a" style="left:1.88px;top:288.38px" width="15.84" height="15.84" viewBox="0 0 18 18"><rect x="3" y="6" width="6" height="7" fill="#f6f6fa" stroke="#666a85" stroke-width="0.900"/><circle cx="9" cy="5.500" r="3" fill="#f6f6fa" stroke="#666a85" stroke-width="0.900"/><circle cx="11" cy="11" r="2.800" fill="#fff" stroke="#666a85" stroke-width="0.900"/><path d="M17.600 13.800 V17.600 H13.800Z" fill="#111"/></svg>
<div class="a" style="left:3px;top:310px;width:14px;height:14px;font-size:12.500px;line-height:14px;color:#444;font-family:'Liberation Sans','Noto Sans CJK SC',sans-serif">字</div>
<svg class="a" style="left:1.88px;top:330.68px" width="15.84" height="15.84" viewBox="0 0 18 18"><rect x="3.500" y="4" width="11" height="10" fill="#fafafe" stroke="#5d6085" stroke-width="1"/><path d="M3.500 7.300 H14.500 M3.500 10.600 H14.500 M7.200 4 V14 M10.800 4 V14" stroke="#7d80a5" stroke-width="0.800"/></svg>
<svg class="a" style="left:1.88px;top:350.28px" width="15.84" height="15.84" viewBox="0 0 18 18"><rect x="3.500" y="2.500" width="4" height="4" fill="#f4f4fa" stroke="#5b5e9a" stroke-width="0.900"/><rect x="6" y="5.500" width="5" height="5" fill="#f5b36a" stroke="#c87a2a" stroke-width="0.700"/><rect x="9" y="9" width="6" height="5.500" fill="#e46a10"/><path d="M17.600 13.800 V17.600 H13.800Z" fill="#111"/></svg>
<svg class="a" style="left:1.88px;top:369.78px" width="15.84" height="15.84" viewBox="0 0 18 18"><path d="M11 2.500 C13 1.500 14.500 3.500 13.500 5 L11.500 7 L9 4.500Z" fill="#23233a"/><path d="M9.500 6 L4 12.500 L3.500 14 L5 13.500 L11 7.500Z" fill="#5e9f96" stroke="#3d5f60" stroke-width="0.600"/><path d="M17.600 13.800 V17.600 H13.800Z" fill="#111"/></svg>
<svg class="a" style="left:1.88px;top:390.98px" width="15.84" height="15.84" viewBox="0 0 18 18"><path d="M9 2.500 C6.500 5.500 5.500 8 6 11 H12 C12.500 8 11.500 5.500 9 2.500Z" fill="#fafaff" stroke="#4a4d6e" stroke-width="1"/><path d="M9 5 V9" stroke="#4a4d6e" stroke-width="0.700"/><rect x="5.500" y="12" width="7" height="1.600" fill="#333652"/><path d="M17.600 13.800 V17.600 H13.800Z" fill="#111"/></svg>
<svg class="a" style="left:1.88px;top:411.48px" width="15.84" height="15.84" viewBox="0 0 18 18"><path d="M4 7.500 L9 3 L14 8 L9 13.500Z" fill="#fdfdfd" stroke="#5a5a6a" stroke-width="1"/><path d="M5 8.500 L13 8.500 L9 13Z" fill="#e0670f"/><path d="M14 8 C15.500 10 15.500 11.500 15 13" fill="none" stroke="#d0701a" stroke-width="1.100"/><path d="M8 2 V5" stroke="#555" stroke-width="0.800"/><path d="M17.600 13.800 V17.600 H13.800Z" fill="#111"/></svg>
<svg class="a" style="left:1.88px;top:431.68px" width="15.84" height="15.84" viewBox="0 0 18 18"><path d="M5 3 L8 2 L10.500 7 L7.500 8.500Z" fill="#6a6ca0" stroke="#44466e" stroke-width="0.600"/><path d="M7 6 L9.500 5" stroke="#e08a2a" stroke-width="1.500"/><circle cx="10" cy="12" r="2.500" fill="#f1d65a"/><path d="M17.600 13.800 V17.600 H13.800Z" fill="#111"/></svg>
<div id="canvas" class="a"></div>
<svg class="a" style="left:38px;top:58px" width="782" height="556" viewBox="38 58 782 556"><rect x="716.500" y="217" width="4.500" height="400" fill="#b2b2b2"/><rect x="119.300" y="214.200" width="597" height="420" fill="#fff" stroke="#a9a9a9" stroke-width="1"/><g fill="none" stroke="#777" stroke-width="1.200"><ellipse cx="415.400" cy="310.100" rx="64.700" ry="62.600"/><ellipse cx="478.300" cy="325.600" rx="64.300" ry="62.700"/><ellipse cx="415.600" cy="387.700" rx="64.900" ry="62.700"/></g><rect x="413.70000000000005" y="245.6" width="3.8" height="3.8" fill="#fff" stroke="#333" stroke-width="0.9"/><rect x="476.40000000000003" y="261.0" width="3.8" height="3.8" fill="#fff" stroke="#333" stroke-width="0.9"/><rect x="413.70000000000005" y="323.1" width="3.8" height="3.8" fill="#fff" stroke="#333" stroke-width="0.9"/><rect x="349.5" y="308.90000000000003" width="2.4" height="2.4" fill="#fff" stroke="#555" stroke-width="0.7"/><rect x="478.90000000000003" y="308.90000000000003" width="2.4" height="2.4" fill="#fff" stroke="#555" stroke-width="0.7"/><rect x="414.40000000000003" y="371.5" width="2.4" height="2.4" fill="#fff" stroke="#555" stroke-width="0.7"/><rect x="541.4" y="324.3" width="2.4" height="2.4" fill="#fff" stroke="#555" stroke-width="0.7"/><rect x="477.1" y="387.1" width="2.4" height="2.4" fill="#fff" stroke="#555" stroke-width="0.7"/><rect x="349.5" y="386.40000000000003" width="2.4" height="2.4" fill="#fff" stroke="#555" stroke-width="0.7"/><rect x="414.40000000000003" y="449.2" width="2.4" height="2.4" fill="#fff" stroke="#555" stroke-width="0.7"/><rect x="342.2" y="238.5" width="5.600" height="5.600" fill="#000"/><rect x="342.2" y="345.8" width="5.600" height="5.600" fill="#000"/><rect x="342.2" y="452.3" width="5.600" height="5.600" fill="#000"/><rect x="443.8" y="238.5" width="5.600" height="5.600" fill="#000"/><rect x="443.8" y="452.3" width="5.600" height="5.600" fill="#000"/><rect x="545.1" y="238.5" width="5.600" height="5.600" fill="#000"/><rect x="545.1" y="345.8" width="5.600" height="5.600" fill="#000"/><rect x="545.1" y="452.3" width="5.600" height="5.600" fill="#000"/><path d="M444 346 L449.200 351.200 M449.200 346 L444 351.200" stroke="#000" stroke-width="1.300"/><path d="M237.100 184.400 L400.500 82 L398.400 78.800 L417.100 77.300 L407.700 92.100 L404 88.700 Z" fill="#f73737"/><path d="M152.500 353.300 L312.800 338.600 L314.200 333.800 L331.600 341 L315.400 349.900 L313.300 346.300 Z" fill="#f73737"/></svg>
<div id="vsb" class="a"></div>
<div class="a" style="left:806px;top:218.500px;width:12px;height:370.500px;background:#dcdcdc;border:1px solid #c6c6c6"></div>
<svg class="a" style="left:808.5px;top:110px" width="7" height="5" viewBox="0 0 7 5"><path d="M0.500 4 L3.500 0.800 L6.500 4" fill="none" stroke="#777" stroke-width="1.200"/></svg>
<svg class="a" style="left:809px;top:400.8px" width="5.6" height="6.6" viewBox="0 0 5.6 6.6"><path d="M0 0.800 H5.600 M0 3.300 H5.600 M0 5.800 H5.600" stroke="#707070" stroke-width="0.900"/></svg>
<div id="dock" class="a">
<div class="a" style="left:0;top:0;width:1px;height:526px;background:#e2e2e2"></div>
<div class="dh" style="top:0px">位图颜色遮罩</div><div class="a" style="left:133.200px;top:1.3px;width:13.200px;height:13px;background:#cfe0f5;border:1px solid #7397c0;border-radius:1.500px"></div><div class="a" style="left:135.700px;top:7.4px;width:8.200px;height:4px;border:1px solid #66788f;background:#f6f8fb;border-radius:1px"></div><div class="a" style="left:148.600px;top:1.3px;width:13.400px;height:13px;background:#d5736b;border:1px solid #94433d;border-radius:1.500px"></div><svg class="a" style="left:151.3px;top:3.8px" width="8" height="8" viewBox="0 0 8 8"><path d="M1 1 L7 7 M7 1 L1 7" stroke="#fff" stroke-width="2.100"/></svg>
<svg class="a" style="left:120px;top:5px" width="8" height="6" viewBox="0 0 8 6"><path d="M0.500 0.500 L3 3 L0.500 5.500 M4 0.500 L6.500 3 L4 5.500" fill="none" stroke="#2f5d86" stroke-width="1.100"/></svg>
<div class="a" style="left:13.100000000000001px;top:21.0px;width:9px;height:9px;border:1px solid #7a7a7a;border-radius:50%;background:#fff"></div><div class="a" style="left:15.600000000000001px;top:23.5px;width:4px;height:4px;border-radius:50%;background:#111"></div>
<div class="lbl" style="left:25.500px;top:19.500px;font-size:9.200px;line-height:12px">隐藏颜色</div>
<div class="a" style="left:13.100000000000001px;top:36.1px;width:9px;height:9px;border:1px solid #7a7a7a;border-radius:50%;background:#fff"></div>
<div class="lbl" style="left:25.500px;top:34.600px;font-size:9.200px;line-height:12px">显示颜色</div>
<div class="a" style="left:13px;top:49px;width:104px;height:62.500px;background:#fff;border:1px solid #9a9a9a;overflow:hidden">
<div class="cb" style="left:2.500px;top:2.90px;width:8.400px;height:8.400px;border-color:#adadad"></div>
<div class="a" style="left:13px;top:1.10px;width:54.500px;height:11.800px;background:#fff;border:2px solid #8cc8f6"></div>
<div class="a" style="left:67.500px;top:1.10px;width:20.500px;height:11.800px;background:#3f97ea"></div>
<div class="a" style="left:15px;top:3.10px;width:50.200px;height:7.700px;background:#1c1c1c"></div>
<div class="lbl" style="left:74.600px;top:1.70px;font-size:8.800px;font-weight:400;color:#fff">0</div>
<div class="cb" style="left:2.500px;top:15.40px;width:8.400px;height:8.400px;border-color:#adadad"></div>
<div class="a" style="left:14.200px;top:14.95px;width:51.800px;height:9.100px;background:#1c1c1c"></div>
<div class="lbl" style="left:74.600px;top:14.20px;font-size:8.800px;font-weight:400;color:#222">0</div>
<div class="cb" style="left:2.500px;top:27.90px;width:8.400px;height:8.400px;border-color:#adadad"></div>
<div class="a" style="left:14.200px;top:27.45px;width:51.800px;height:9.100px;background:#1c1c1c"></div>
<div class="lbl" style="left:74.600px;top:26.70px;font-size:8.800px;font-weight:400;color:#222">0</div>
<div class="cb" style="left:2.500px;top:40.40px;width:8.400px;height:8.400px;border-color:#adadad"></div>
<div class="a" style="left:14.200px;top:39.95px;width:51.800px;height:9.100px;background:#1c1c1c"></div>
<div class="lbl" style="left:74.600px;top:39.20px;font-size:8.800px;font-weight:400;color:#222">0</div>
<div class="cb" style="left:2.500px;top:52.90px;width:8.400px;height:8.400px;border-color:#adadad"></div>
<div class="a" style="left:14.200px;top:52.45px;width:51.800px;height:9.100px;background:#1c1c1c"></div>
<div class="lbl" style="left:74.600px;top:51.70px;font-size:8.800px;font-weight:400;color:#222">0</div>
<div class="a" style="left:66.800px;top:0;width:1px;height:62px;background:#2a2a2a"></div>
<div class="a" style="left:88px;top:0;width:15px;height:62px;background:#f0f0f0"></div>
<div class="a" style="left:89px;top:14.500px;width:11.500px;height:12.500px;background:#d2d2d2;border:1px solid #c0c0c0"></div>
<svg class="a" style="left:91px;top:6px" width="7" height="5" viewBox="0 0 7 5"><path d="M0.500 4 L3.500 0.800 L6.500 4" fill="none" stroke="#666" stroke-width="1.100"/></svg>
<svg class="a" style="left:91px;top:51px" width="7" height="5" viewBox="0 0 7 5"><path d="M0.500 0.800 L3.500 4 L6.500 0.800" fill="none" stroke="#666" stroke-width="1.100"/></svg>
</div>
<div class="btn" style="left:13.7px;top:167.3px;width:17px;height:17.2px;background:#d9dde3"></div><svg class="a" style="left:15.7px;top:169.3px" width="13" height="13" viewBox="0 0 13 13"><path d="M9 1.500 C11 0.500 12.500 2.500 11.500 4 L9.500 6 L7.500 4Z" fill="#23233a"/><path d="M8 5 L2.500 10.500 L1.500 12 L3.500 11.500 L9 6Z" fill="#55585e"/></svg>
<div class="btn" style="left:36.7px;top:167.3px;width:17.2px;height:17.2px;background:#d9dde3"></div><svg class="a" style="left:38.7px;top:169.3px" width="13" height="13" viewBox="0 0 13 13"><rect x="1.500" y="1.500" width="10" height="10" fill="#f5f5f5" stroke="#333" stroke-width="1"/><rect x="5.500" y="3" width="3" height="3.500" fill="#d8232a"/><rect x="8" y="5" width="3" height="3.500" fill="#f1c40f"/><rect x="5.500" y="7" width="3" height="3.500" fill="#2c3e9a"/></svg>
<div class="btn" style="left:76.2px;top:167.3px;width:17.4px;height:17.2px;background:#d9dde3"></div><svg class="a" style="left:78.2px;top:169.3px" width="13" height="13" viewBox="0 0 13 13"><rect x="2" y="2" width="9.500" height="9.500" fill="#2c2f74"/><rect x="4" y="2.500" width="5.500" height="3.500" fill="#f4f4fa"/><rect x="4" y="8" width="5.500" height="3.500" fill="#5b5e9a"/></svg>
<div class="btn" style="left:98.6px;top:167.3px;width:17.5px;height:17.2px;background:#d9dde3"></div><svg class="a" style="left:100.6px;top:169.3px" width="13" height="13" viewBox="0 0 13 13"><path d="M1.500 2.500 H5.500 L6.500 4 H11 V11 H1.500Z" fill="#27305e"/><path d="M2.500 6.500 H12 L11 11 H2Z" fill="#eef0f6" stroke="#5a6384" stroke-width="0.800"/></svg>
<div class="lbl" style="left:13px;top:190.500px;font-size:9.200px;line-height:12px">容限:</div>
<div class="a" style="left:19px;top:209.700px;width:50.500px;height:1.500px;background:#dedede;border-top:1px solid #cfcfcf"></div>
<svg class="a" style="left:18px;top:205px" width="8" height="11" viewBox="0 0 8 11"><path d="M0.500 0.500 H7.500 V7 L4 10.300 L0.500 7Z" fill="#f4f4f4" stroke="#8a8a8a" stroke-width="0.900"/></svg>
<svg class="a" style="left:22px;top:219px" width="46" height="2"><rect x="0" y="0" width="1" height="1.500" fill="#d0d0d0"/><rect x="11" y="0" width="1" height="1.500" fill="#d0d0d0"/><rect x="22" y="0" width="1" height="1.500" fill="#d0d0d0"/><rect x="33" y="0" width="1" height="1.500" fill="#d0d0d0"/><rect x="44" y="0" width="1" height="1.500" fill="#d0d0d0"/></svg>
<div class="inp" style="left:79px;top:203.400px;width:28px;height:15.500px;line-height:13.500px;font-size:9.4px;border:1px solid #8c8c8c;box-shadow:inset 0 0 0 1px #e3e3e3"><i>0</i></div>
<div class="lbl" style="left:109.300px;top:204.700px;font-size:9.600px;line-height:12px;color:#111;font-weight:700">%</div>
<div class="a" style="left:14px;top:228.500px;width:78.500px;height:17px;border:1px solid #adadad;background:#efefef;box-shadow:inset 0 0 0 1px #fafafa;text-align:center;font-size:9.200px;line-height:15px;color:#9b9b9b">应用</div>
<div class="a" style="left:98px;top:228.500px;width:17px;height:17px;border:1px solid #c4c4c4;background:#f0f0f0"></div>
<svg class="a" style="left:101.5px;top:231px" width="10" height="12.5" viewBox="0 0 8 10"><path d="M0.500 2 H7.500 M2.500 2 V0.800 H5.500 V2 M1.300 2.500 L1.800 9.500 H6.200 L6.700 2.500 M3 4 V8 M5 4 V8" fill="none" stroke="#c6c6c6" stroke-width="0.800"/></svg>
<div class="dh" style="top:246px">变换</div><div class="a" style="left:133.200px;top:247.3px;width:13.200px;height:13px;background:#cfe0f5;border:1px solid #7397c0;border-radius:1.500px"></div><div class="a" style="left:135.700px;top:253.4px;width:8.200px;height:4px;border:1px solid #66788f;background:#f6f8fb;border-radius:1px"></div><div class="a" style="left:148.600px;top:247.3px;width:13.400px;height:13px;background:#d5736b;border:1px solid #94433d;border-radius:1.500px"></div><svg class="a" style="left:151.3px;top:249.8px" width="8" height="8" viewBox="0 0 8 8"><path d="M1 1 L7 7 M7 1 L1 7" stroke="#fff" stroke-width="2.100"/></svg>
<div class="btn" style="left:14.2px;top:266px;width:17px;height:17px;background:#a6cdf0"></div><svg class="a" style="left:16.2px;top:268px" width="13" height="13" viewBox="0 0 13 13"><path d="M6.500 1.500 V11.500 M1.500 6.500 H11.500" stroke="#fff" stroke-width="2.600"/><path d="M6.500 1.500 V11.500 M1.500 6.500 H11.500" stroke="#55606e" stroke-width="0.800"/></svg>
<div class="btn" style="left:34.2px;top:266px;width:17px;height:17px;background:#d9dde3"></div><svg class="a" style="left:36.2px;top:268px" width="13" height="13" viewBox="0 0 13 13"><path d="M3 5 A4 4 0 1 1 3.500 9" fill="none" stroke="#444" stroke-width="1.100"/><path d="M0.800 4 L4.800 3.500 L3.800 7Z" fill="#444"/></svg>
<div class="btn" style="left:54.2px;top:266px;width:17px;height:17px;background:#d9dde3"></div><svg class="a" style="left:56.2px;top:268px" width="13" height="13" viewBox="0 0 13 13"><path d="M3 2.500 H10 L8 6.500 H1Z" fill="#f6f6f6" stroke="#666" stroke-width="0.800"/><path d="M5 7 L9.500 11" stroke="#888" stroke-width="0.800"/><path d="M11.500 2 V8 M10 6.500 L11.500 8.500 L13 6.500" fill="none" stroke="#222" stroke-width="1"/></svg>
<div class="btn" style="left:74.2px;top:266px;width:17px;height:17px;background:#d9dde3"></div><svg class="a" style="left:76.2px;top:268px" width="13" height="13" viewBox="0 0 13 13"><rect x="2" y="5.500" width="6" height="6" fill="#fafafa" stroke="#666" stroke-width="0.800"/><path d="M5 0.500 V4 M9 8.500 H12.500" stroke="#222" stroke-width="1.100"/><path d="M3.800 2 L5 0.500 L6.200 2 M11 7.300 L12.500 8.500 L11 9.700" fill="none" stroke="#222" stroke-width="0.900"/></svg>
<div class="btn" style="left:94.2px;top:266px;width:17px;height:17px;background:#d9dde3"></div><svg class="a" style="left:96.2px;top:268px" width="13" height="13" viewBox="0 0 13 13"><path d="M2 5 L7 4 L11.500 9 L6.500 10Z" fill="#fafafa" stroke="#555" stroke-width="0.900"/><path d="M3 3 L8 2" stroke="#333" stroke-width="1"/><path d="M2.500 2 L3 3.500" stroke="#333"/></svg>
<div class="a" style="left:13px;top:288.800px;width:112px;height:1px;background:#c2c2c2"></div>
<div class="lbl" style="left:13px;top:298px;font-size:9.200px;line-height:12px">位置:</div>
<div class="lbl" style="left:15.300px;top:321.7px;font-size:9.200px;line-height:12px">水平:</div><div class="inp" style="left:47.700px;top:318.9px;width:64.300px;height:17.200px;line-height:12.500px;font-size:9.4px;border:1px solid #c2c2c2;box-shadow:inset 0 0 0 1px #ececec"><i><span style="color:#c0392b">.</span>0</i></div><div class="a" style="left:98.300px;top:320.4px;width:12.500px;height:14.200px;background:#e0e0ea;border:1px solid #a8a8b0"></div><div class="a" style="left:98.300px;top:327.2px;width:12.500px;height:1px;background:#a8a8a8"></div><svg class="a" style="left:102.5px;top:322.7px" width="4" height="3" viewBox="0 0 4 3"><path d="M0 3 L2 0.500 L4 3Z" fill="#555"/></svg><svg class="a" style="left:102.5px;top:329.7px" width="4" height="3" viewBox="0 0 4 3"><path d="M0 0 L2 2.500 L4 0Z" fill="#555"/></svg><div class="lbl" style="left:113px;top:322.4px;font-size:9.600px;font-weight:400;transform:scaleX(.78);transform-origin:0 50%">mm</div>
<div class="lbl" style="left:15.300px;top:343.3px;font-size:9.200px;line-height:12px">垂直:</div><div class="inp" style="left:47.700px;top:340.5px;width:64.300px;height:17.200px;line-height:12.500px;font-size:9.4px;border:1px solid #c2c2c2;box-shadow:inset 0 0 0 1px #ececec"><i><span style="color:#c0392b">.</span>0</i></div><div class="a" style="left:98.300px;top:342.0px;width:12.500px;height:14.200px;background:#e0e0ea;border:1px solid #a8a8b0"></div><div class="a" style="left:98.300px;top:348.8px;width:12.500px;height:1px;background:#a8a8a8"></div><svg class="a" style="left:102.5px;top:344.3px" width="4" height="3" viewBox="0 0 4 3"><path d="M0 3 L2 0.500 L4 3Z" fill="#555"/></svg><svg class="a" style="left:102.5px;top:351.3px" width="4" height="3" viewBox="0 0 4 3"><path d="M0 0 L2 2.500 L4 0Z" fill="#555"/></svg><div class="lbl" style="left:113px;top:344.0px;font-size:9.600px;font-weight:400;transform:scaleX(.78);transform-origin:0 50%">mm</div>
<div class="cb" style="left:15.200px;top:412.500px;width:9.500px;height:9.500px;border-color:#8c8c8c"></div>
<svg class="a" style="left:16.2px;top:413.5px" width="8" height="8" viewBox="0 0 8 8"><path d="M1 4 L3 6.500 L7 1" fill="none" stroke="#111" stroke-width="1.500"/></svg>
<div class="lbl" style="left:27.600px;top:411.200px;font-size:9.200px;line-height:12px">相对位置</div>
<div class="cb" style="left:20.3px;top:430.5px;width:9.600px;height:9.600px;border-color:#9a9a9a;background:#f3f3f3"></div>
<div class="cb" style="left:39.1px;top:430.5px;width:9.600px;height:9.600px;border-color:#9a9a9a;background:#f3f3f3"></div>
<div class="cb" style="left:58px;top:430.5px;width:9.600px;height:9.600px;border-color:#9a9a9a;background:#f3f3f3"></div>
<div class="cb" style="left:20.3px;top:445.8px;width:9.600px;height:9.600px;border-color:#9a9a9a;background:#f3f3f3"></div>
<div class="a" style="left:39.4px;top:446.1px;width:9px;height:9px;border:1px solid #7a7a7a;border-radius:50%;background:#fff"></div><div class="a" style="left:41.9px;top:448.6px;width:4px;height:4px;border-radius:50%;background:#111"></div>
<div class="cb" style="left:58px;top:445.8px;width:9.600px;height:9.600px;border-color:#9a9a9a;background:#f3f3f3"></div>
<div class="cb" style="left:20.3px;top:461.7px;width:9.600px;height:9.600px;border-color:#9a9a9a;background:#f3f3f3"></div>
<div class="cb" style="left:39.1px;top:461.7px;width:9.600px;height:9.600px;border-color:#9a9a9a;background:#f3f3f3"></div>
<div class="cb" style="left:58px;top:461.7px;width:9.600px;height:9.600px;border-color:#9a9a9a;background:#f3f3f3"></div>
<svg class="a" style="left:89.7px;top:437px" width="30" height="30" viewBox="0 0 30 30"><rect x="3.500" y="3" width="23" height="23" fill="#d6d6f0"/><rect x="3.500" y="14.500" width="23" height="11.500" fill="#b2b2de"/><path d="M3.5 3 V26 M3.500 3.0 H26.500" stroke="#8c8cc8" stroke-width="0.700"/><path d="M9.25 3 V26 M3.500 8.75 H26.500" stroke="#8c8cc8" stroke-width="0.700"/><path d="M15.0 3 V26 M3.500 14.5 H26.500" stroke="#8c8cc8" stroke-width="0.700"/><path d="M20.75 3 V26 M3.500 20.25 H26.500" stroke="#8c8cc8" stroke-width="0.700"/><path d="M26.5 3 V26 M3.500 26.0 H26.500" stroke="#8c8cc8" stroke-width="0.700"/><path d="M15 0.500 V29 M0.500 14.500 H29.500" stroke="#333" stroke-width="0.800"/><path d="M15 0 L13.500 2 H16.500Z M15 29.500 L13.500 27.500 H16.500Z M0 14.500 L2 13 V16Z M30 14.500 L28 13 V16Z" fill="#222"/></svg>
<div class="a" style="left:13px;top:481.500px;width:111px;height:1px;background:#bdbdbd"></div>
<div class="btn" style="left:14.500px;top:488.700px;width:110.500px;height:16px;background:#e2e2e2;border-color:#78a6d4;text-align:center;font-size:9.200px;line-height:14px;color:#111">应用到再制</div>
<div class="btn" style="left:14.500px;top:508.600px;width:110.500px;height:16px;background:#e2e2e2;border-color:#78a6d4;text-align:center;font-size:9.200px;line-height:14px;color:#111">应用</div>
</div>
<div id="pal" class="a">
<div class="a" style="left:0;top:0;width:1px;height:526px;background:#e4e4e4"></div>
<svg class="a" style="left:4px;top:2px" width="9" height="2"><rect x="0.0" y="0" width="1" height="1" fill="#c4c4c4"/><rect x="2.5" y="0" width="1" height="1" fill="#c4c4c4"/><rect x="5.0" y="0" width="1" height="1" fill="#c4c4c4"/><rect x="7.5" y="0" width="1" height="1" fill="#c4c4c4"/></svg>
<svg class="a" style="left:3px;top:9px" width="10" height="10" viewBox="0 0 10 10"><circle cx="5" cy="5" r="4.500" fill="#f7f7f7" stroke="#c9c9c9" stroke-width="0.800"/><path d="M3.800 2.800 L7 5 L3.800 7.200Z" fill="#111"/></svg>
<svg class="a" style="left:4.8px;top:26.3px" width="6.4" height="4.6" viewBox="0 0 7 5"><path d="M0.500 4 L3.500 0.800 L6.500 4" fill="none" stroke="#aaa" stroke-width="1.100"/></svg>
<div class="a" style="left:1.500px;top:34.099999999999994px;width:13.500px;height:13.35px;background:#fff;border:1px solid #5a5a5a"></div>
<svg class="a" style="left:1.5px;top:34.099999999999994px" width="14" height="13.35" viewBox="0 0 14 13.35"><path d="M0.500 0.500 L13 12.85 M13 0.500 L0.500 12.85" stroke="#444" stroke-width="0.800"/></svg>
<div class="a" style="left:1.500px;top:47.449999999999996px;width:13.400px;height:13.65px;background:#1f1f1f;box-shadow:inset 0 0.8px 0 rgba(0,0,0,.22)"></div>
<div class="a" style="left:1.500px;top:60.8px;width:13.400px;height:13.65px;background:#363636;box-shadow:inset 0 0.8px 0 rgba(0,0,0,.22)"></div>
<div class="a" style="left:1.500px;top:74.14999999999999px;width:13.400px;height:13.65px;background:#484848;box-shadow:inset 0 0.8px 0 rgba(0,0,0,.22)"></div>
<div class="a" style="left:1.500px;top:87.5px;width:13.400px;height:13.65px;background:#5a5a5a;box-shadow:inset 0 0.8px 0 rgba(0,0,0,.22)"></div>
<div class="a" style="left:1.500px;top:100.85px;width:13.400px;height:13.65px;background:#6e6e6e;box-shadow:inset 0 0.8px 0 rgba(0,0,0,.22)"></div>
<div class="a" style="left:1.500px;top:114.19999999999999px;width:13.400px;height:13.65px;background:#808080;box-shadow:inset 0 0.8px 0 rgba(0,0,0,.22)"></div>
<div class="a" style="left:1.500px;top:127.55px;width:13.400px;height:13.65px;background:#939393;box-shadow:inset 0 0.8px 0 rgba(0,0,0,.22)"></div>
<div class="a" style="left:1.500px;top:140.89999999999998px;width:13.400px;height:13.65px;background:#a9a9a9;box-shadow:inset 0 0.8px 0 rgba(0,0,0,.22)"></div>
<div class="a" style="left:1.500px;top:154.25px;width:13.400px;height:13.65px;background:#c0c0c0;box-shadow:inset 0 0.8px 0 rgba(0,0,0,.22)"></div>
<div class="a" style="left:1.500px;top:167.6px;width:13.400px;height:13.65px;background:#dcdcdc;box-shadow:inset 0 0.8px 0 rgba(0,0,0,.22)"></div>
<div class="a" style="left:1.500px;top:180.95px;width:13.400px;height:13.65px;background:#ffffff;box-shadow:inset 0 0.8px 0 rgba(0,0,0,.22)"></div>
<div class="a" style="left:1.500px;top:194.29999999999998px;width:13.400px;height:13.65px;background:#2e1578"></div>
<div class="a" style="left:1.500px;top:207.64999999999998px;width:13.400px;height:13.65px;background:#1a88e0"></div>
<div class="a" style="left:1.500px;top:221.0px;width:13.400px;height:13.65px;background:#0a9450"></div>
<div class="a" style="left:1.500px;top:234.35px;width:13.400px;height:13.65px;background:#fdf01a"></div>
<div class="a" style="left:1.500px;top:247.7px;width:13.400px;height:13.65px;background:#ee3a0c"></div>
<div class="a" style="left:1.500px;top:261.04999999999995px;width:13.400px;height:13.65px;background:#e8247c"></div>
<div class="a" style="left:1.500px;top:274.4px;width:13.400px;height:13.65px;background:#a03874"></div>
<div class="a" style="left:1.500px;top:287.75px;width:14.500px;height:13.35px;background:#fff"></div>
<div class="a" style="left:2.200px;top:288.45px;width:12px;height:11.95px;background:#f08000;border:1.300px solid #4a2a10"></div>
<div class="a" style="left:1.500px;top:301.1px;width:13.400px;height:13.65px;background:#f79c9c"></div>
<div class="a" style="left:1.500px;top:314.44999999999993px;width:13.400px;height:13.65px;background:#786460"></div>
<div class="a" style="left:1.500px;top:327.79999999999995px;width:13.400px;height:13.65px;background:#b8a8d4"></div>
<div class="a" style="left:1.500px;top:341.15px;width:13.400px;height:13.65px;background:#9882c0"></div>
<div class="a" style="left:1.500px;top:354.5px;width:13.400px;height:13.65px;background:#5878b8"></div>
<div class="a" style="left:1.500px;top:367.85px;width:13.400px;height:13.65px;background:#7858a8"></div>
<div class="a" style="left:1.500px;top:381.19999999999993px;width:13.400px;height:13.65px;background:#8070a0"></div>
<div class="a" style="left:1.500px;top:394.54999999999995px;width:13.400px;height:13.65px;background:#405480"></div>
<div class="a" style="left:1.500px;top:407.9px;width:13.400px;height:13.65px;background:#4a4460"></div>
<div class="a" style="left:1.500px;top:421.25px;width:13.400px;height:13.65px;background:#5a6c8c"></div>
<div class="a" style="left:1.500px;top:434.6px;width:13.400px;height:13.65px;background:#0878d0"></div>
<div class="a" style="left:1.500px;top:447.94999999999993px;width:13.400px;height:13.65px;background:#58b8f4"></div>
<div class="a" style="left:1.500px;top:461.29999999999995px;width:13.400px;height:13.65px;background:#9ab0c4"></div>
<div class="a" style="left:1.500px;top:474.65px;width:13.400px;height:13.65px;background:#7c8c98"></div>
<div class="a" style="left:1.500px;top:488.0px;width:13.400px;height:13.65px;background:#646c74"></div>
<div class="a" style="left:1.500px;top:501.35px;width:13.400px;height:13.65px;background:#3e464e"></div>
<div class="a" style="left:1.500px;top:514.6999999999999px;width:13.400px;height:13.65px;background:#3e5e64"></div>
<div class="a" style="left:1px;top:47px;width:0.800px;height:480px;background:#8c8c8c"></div>
<div class="a" style="left:14.900px;top:47px;width:1.100px;height:480px;background:#b9b9b9"></div>
</div>
</body></html>
